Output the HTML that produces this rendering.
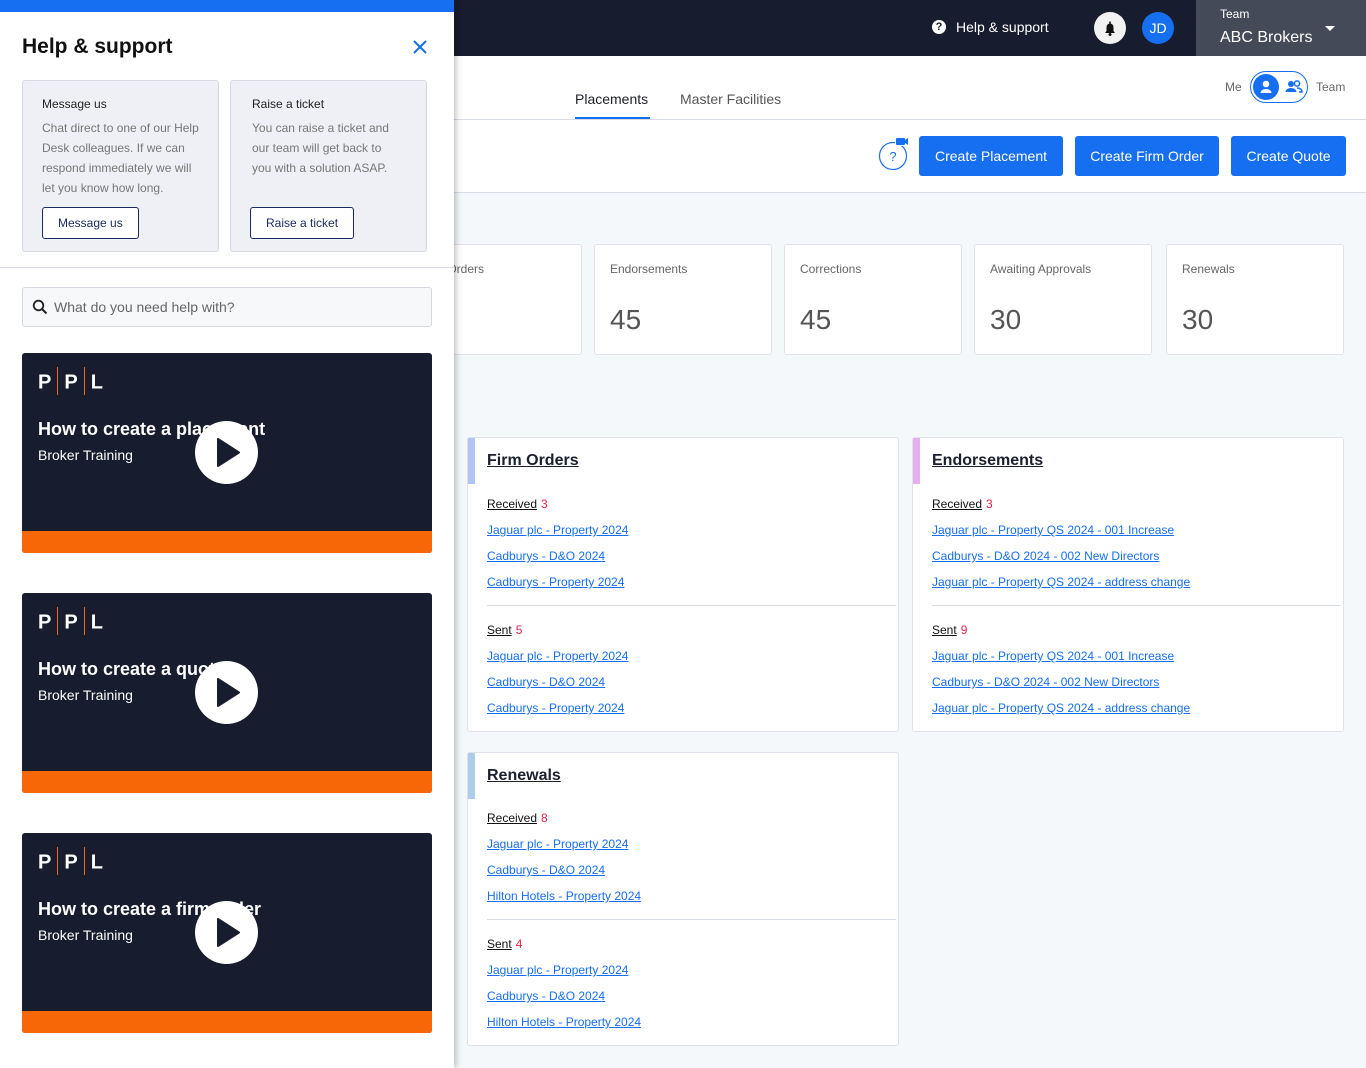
<!DOCTYPE html>
<html><head><meta charset="utf-8"><style>
*{box-sizing:border-box;margin:0;padding:0}
body{width:1366px;height:1068px;overflow:hidden;font-family:"Liberation Sans",Arial,sans-serif;background:#f5f8fb;position:relative;color:#1b1f2e}
.abs{position:absolute}
.top{left:0;top:0;width:1366px;height:56px;background:#171c2e}
.teambox{left:1196px;top:0;width:170px;height:56px;background:#454a58;color:#fff}
.white{left:0;top:56px;width:1366px;height:137px;background:#fff;border-bottom:1px solid #d8dce4}
.btn{top:136px;height:40px;background:#166ef0;color:#fff;border-radius:3px;font-size:14px;display:flex;align-items:center;justify-content:center}
.stat{top:244px;width:178px;height:111px;background:#fff;border:1px solid #dfe2e8;border-radius:3px}
.stat .l{position:absolute;left:15px;top:17px;font-size:12px;color:#666}
.stat .n{position:absolute;left:15px;top:59px;font-size:28px;color:#555}
.panel{background:#fff;border:1px solid #dfe2e8;border-radius:3px;width:432px}
.panel .acc{position:absolute;left:0;top:0;width:7px;height:46px}
.panel h3{position:absolute;left:19px;top:14px;font-size:16px;font-weight:bold;text-decoration:underline;color:#1b1f2e}
.panel .s{position:absolute;left:19px;font-size:12px;text-decoration:underline;color:#111}
.panel .s b{font-weight:normal;color:#e8224a;text-decoration:none;display:inline-block;margin-left:4px}
.panel a{position:absolute;left:19px;font-size:12px;color:#166ef0;text-decoration:underline}
.panel .hr{position:absolute;left:19px;right:2px;height:1px;background:#d8dce4}
.drawer{left:0;top:0;width:454px;height:1068px;background:#fff;box-shadow:2px 0 6px rgba(0,0,0,.25)}
.card{top:80px;width:197px;height:172px;background:#eef0f5;border:1px solid #d6d9e0;border-radius:3px}
.card .t{position:absolute;left:19px;top:16px;font-size:12px;color:#222}
.card .d{position:absolute;left:19px;top:37px;font-size:12px;color:#777;line-height:20px}
.card .b{position:absolute;left:19px;top:126px;height:32px;border:1px solid #1b2a5e;border-radius:3px;background:#fff;font-size:12px;color:#1b2a5e;display:flex;align-items:center;padding:0 15px}
.vid{left:22px;width:410px;height:200px;background:#171c2e;border-radius:3px;overflow:hidden}
.vid .or{position:absolute;left:0;bottom:0;width:100%;height:22px;background:#f76707}
.vid .logo{position:absolute;left:16px;top:16px;color:#fff;font-weight:bold;font-size:20px}
.vid .logo i{display:inline-block;width:1px;height:28px;background:#f76707;vertical-align:middle;margin:0 6px;position:relative;top:-2px}
.vid .h{position:absolute;left:16px;top:66px;color:#fff;font-weight:bold;font-size:18px}
.vid .sub{position:absolute;left:16px;top:94px;color:#fff;font-size:14px}
.vid .play{position:absolute;left:173px;top:68px;width:63px;height:63px;border-radius:50%;background:#fff}
</style></head><body>
<div class="abs top"></div>
<div class="abs" style="left:932px;top:20px;width:14px;height:14px;border-radius:50%;background:#fff;color:#171c2e;font-size:11px;font-weight:bold;text-align:center;line-height:14px">?</div>
<div class="abs" style="left:956px;top:19px;color:#fff;font-size:14px">Help &amp; support</div>
<div class="abs" style="left:1094px;top:12px;width:32px;height:32px;border-radius:50%;background:#f2f2f2"><svg width="32" height="32" viewBox="0 0 32 32"><path d="M11 21h10l-1.5-2v-4a3.5 3.5 0 0 0-7 0v4z" fill="#111"/><circle cx="16" cy="22.5" r="1.5" fill="#111"/><rect x="15.2" y="9.5" width="1.6" height="2" fill="#111"/></svg></div>
<div class="abs" style="left:1142px;top:12px;width:32px;height:32px;border-radius:50%;background:#166ef0;color:#fff;font-size:14px;text-align:center;line-height:32px">JD</div>
<div class="abs teambox"><div class="abs" style="left:24px;top:7px;font-size:12px">Team</div><div class="abs" style="left:24px;top:29px;font-size:16px">ABC Brokers</div><div class="abs" style="left:129px;top:26px;width:0;height:0;border-left:5px solid transparent;border-right:5px solid transparent;border-top:5px solid #fff"></div></div>
<div class="abs white"></div>
<div class="abs" style="left:454px;top:119px;width:912px;height:1px;background:#d8dce4"></div>
<div class="abs" style="left:575px;top:91px;font-size:14px;color:#1b1f2e">Placements</div>
<div class="abs" style="left:575px;top:117px;width:75px;height:2px;background:#166ef0"></div>
<div class="abs" style="left:680px;top:91px;font-size:14px;color:#555">Master Facilities</div>
<div class="abs" style="left:1225px;top:80px;font-size:12px;color:#666">Me</div>
<div class="abs" style="left:1250px;top:71px;width:58px;height:32px;border:1px solid #166ef0;border-radius:16px;background:#fff"><div class="abs" style="left:2px;top:2px;width:26px;height:26px;border-radius:50%;background:#166ef0"><svg width="26" height="26"><circle cx="13" cy="10" r="3.3" fill="#fff"/><path d="M7.5 19a5.5 4 0 0 1 11 0z" fill="#fff"/></svg></div><svg class="abs" style="left:32px;top:5px" width="22" height="20"><circle cx="8" cy="7" r="3" fill="#166ef0"/><path d="M2.5 15a5.5 4 0 0 1 11 0z" fill="#166ef0"/><circle cx="14" cy="6.5" r="2.6" fill="none" stroke="#166ef0" stroke-width="1.5"/><path d="M14 11c3 0 5 1.5 5 4h-3" fill="none" stroke="#166ef0" stroke-width="1.5"/></svg></div>
<div class="abs" style="left:1316px;top:80px;font-size:12px;color:#666">Team</div>
<svg class="abs" style="left:877px;top:136px" width="34" height="36"><circle cx="16" cy="20" r="13.5" fill="none" stroke="#166ef0" stroke-width="1.2"/><rect x="18" y="2" width="11" height="8" fill="#fff"/><rect x="19" y="2" width="9" height="7" rx="1" fill="#166ef0"/><path d="M28 4l3-2v7l-3-2z" fill="#166ef0"/><text x="16" y="25" font-size="13" fill="#166ef0" text-anchor="middle" font-family="Liberation Sans">?</text></svg>
<div class="abs btn" style="left:919px;width:144px">Create Placement</div>
<div class="abs btn" style="left:1075px;width:144px">Create Firm Order</div>
<div class="abs btn" style="left:1231px;width:115px">Create Quote</div>

<div class="abs stat" style="left:404px"><div class="l">Firm Orders</div></div>
<div class="abs stat" style="left:594px"><div class="l">Endorsements</div><div class="n">45</div></div>
<div class="abs stat" style="left:784px"><div class="l">Corrections</div><div class="n">45</div></div>
<div class="abs stat" style="left:974px"><div class="l">Awaiting Approvals</div><div class="n">30</div></div>
<div class="abs stat" style="left:1166px"><div class="l">Renewals</div><div class="n">30</div></div>

<div class="abs panel" style="left:467px;top:437px;height:295px"><div class="acc" style="background:#b3c3f5"></div><h3>Firm Orders</h3>
<div class="s" style="top:59px">Received<b>3</b></div><a style="top:85px">Jaguar plc - Property 2024 </a><a style="top:111px">Cadburys - D&amp;O 2024</a><a style="top:137px">Cadburys - Property 2024</a><div class="hr" style="top:167px"></div>
<div class="s" style="top:185px">Sent<b>5</b></div><a style="top:211px">Jaguar plc - Property 2024 </a><a style="top:237px">Cadburys - D&amp;O 2024</a><a style="top:263px">Cadburys - Property 2024</a></div>
<div class="abs panel" style="left:912px;top:437px;height:295px"><div class="acc" style="background:#e6b0f0"></div><h3>Endorsements</h3>
<div class="s" style="top:59px">Received<b>3</b></div><a style="top:85px">Jaguar plc - Property QS 2024 - 001 Increase </a><a style="top:111px">Cadburys - D&amp;O 2024 - 002 New Directors</a><a style="top:137px">Jaguar plc - Property QS 2024 - address change</a><div class="hr" style="top:167px"></div>
<div class="s" style="top:185px">Sent<b>9</b></div><a style="top:211px">Jaguar plc - Property QS 2024 - 001 Increase </a><a style="top:237px">Cadburys - D&amp;O 2024 - 002 New Directors</a><a style="top:263px">Jaguar plc - Property QS 2024 - address change</a></div>
<div class="abs panel" style="left:467px;top:752px;height:294px"><div class="acc" style="background:#a9cdea"></div><h3>Renewals</h3>
<div class="s" style="top:58px">Received<b>8</b></div><a style="top:84px">Jaguar plc - Property 2024 </a><a style="top:110px">Cadburys - D&amp;O 2024</a><a style="top:136px">Hilton Hotels - Property 2024</a><div class="hr" style="top:166px"></div>
<div class="s" style="top:184px">Sent<b>4</b></div><a style="top:210px">Jaguar plc - Property 2024 </a><a style="top:236px">Cadburys - D&amp;O 2024</a><a style="top:262px">Hilton Hotels - Property 2024</a></div>

<div class="abs drawer">
<div class="abs" style="left:0;top:0;width:454px;height:12px;background:#166ef0"></div>
<div class="abs" style="left:22px;top:35px;font-size:21px;font-weight:bold;color:#111">Help &amp; support</div>
<svg class="abs" style="left:412px;top:39px" width="16" height="16"><path d="M2 2l12 12M14 2L2 14" stroke="#166ef0" stroke-width="2"/></svg>
<div class="abs card" style="left:22px"><div class="t">Message us</div><div class="d" style="width:162px">Chat direct to one of our Help Desk colleagues. If we can respond immediately we will let you know how long.</div><div class="b">Message us</div></div>
<div class="abs card" style="left:230px"><div class="t" style="left:21px">Raise a ticket</div><div class="d" style="left:21px;width:142px">You can raise a ticket and our team will get back to you with a solution ASAP.</div><div class="b">Raise a ticket</div></div>
<div class="abs" style="left:0;top:267px;width:454px;height:1px;background:#d8dce4"></div>
<div class="abs" style="left:22px;top:287px;width:410px;height:40px;border:1px solid #d6d9e0;border-radius:3px;background:#f7f8fa"><svg class="abs" style="left:9px;top:11px" width="16" height="16"><circle cx="6.5" cy="6.5" r="4.8" fill="none" stroke="#222" stroke-width="1.8"/><path d="M10 10l4.5 4.5" stroke="#222" stroke-width="2"/></svg><div class="abs" style="left:31px;top:11px;font-size:14px;color:#666">What do you need help with?</div></div>
<div class="abs vid" style="top:353px"><div class="logo">P<i></i>P<i></i>L</div><div class="h">How to create a placement</div><div class="sub">Broker Training</div><div class="play"><svg width="63" height="63"><path d="M23 18v27l21-13.5z" fill="#171c2e" stroke="#171c2e" stroke-width="2" stroke-linejoin="round"/></svg></div><div class="or"></div></div>
<div class="abs vid" style="top:593px"><div class="logo">P<i></i>P<i></i>L</div><div class="h">How to create a quote</div><div class="sub">Broker Training</div><div class="play"><svg width="63" height="63"><path d="M23 18v27l21-13.5z" fill="#171c2e" stroke="#171c2e" stroke-width="2" stroke-linejoin="round"/></svg></div><div class="or"></div></div>
<div class="abs vid" style="top:833px"><div class="logo">P<i></i>P<i></i>L</div><div class="h">How to create a firm order</div><div class="sub">Broker Training</div><div class="play"><svg width="63" height="63"><path d="M23 18v27l21-13.5z" fill="#171c2e" stroke="#171c2e" stroke-width="2" stroke-linejoin="round"/></svg></div><div class="or"></div></div>
</div>
</body></html>
